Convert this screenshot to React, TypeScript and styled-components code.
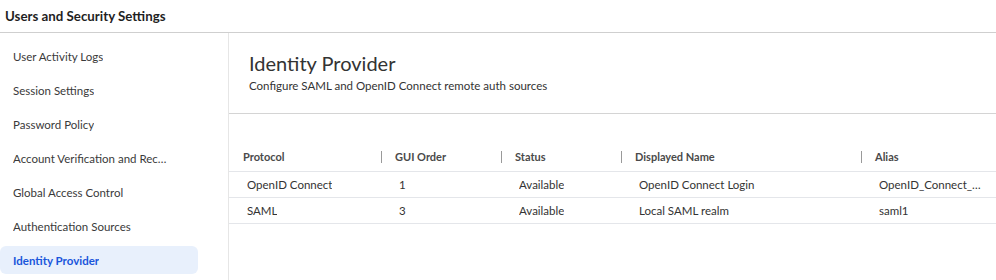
import React from 'react';
import styled, { createGlobalStyle } from 'styled-components';

const GlobalStyle = createGlobalStyle`
  html, body {
    margin: 0;
    padding: 0;
    background: #ffffff;
  }
  body {
    font-family: Lato, "Noto Sans", "Liberation Sans", sans-serif;
    color: #333333;
  }
  * {
    box-sizing: border-box;
  }
`;

const Page = styled.div`
  width: 996px;
  height: 280px;
  overflow: hidden;
  display: flex;
  flex-direction: column;
`;

const TopBar = styled.header`
  height: 33px;
  flex-shrink: 0;
  display: flex;
  align-items: center;
  padding: 0 0 1px 5px;
  border-bottom: 1px solid #cfcfcf;
  font-size: 13.3px;
  font-weight: 700;
  color: #1f1f1f;
`;

const Body = styled.div`
  flex: 1;
  display: flex;
  min-height: 0;
`;

const Sidebar = styled.nav`
  width: 229px;
  flex-shrink: 0;
  border-right: 1px solid #e6e6e6;
  padding-top: 9px;
  display: flex;
  flex-direction: column;
  gap: 6px;
`;

const NavItem = styled.div<{ $active?: boolean }>`
  width: 198px;
  height: 28px;
  padding: 0 26px 0 13px;
  display: flex;
  align-items: center;
  flex-shrink: 0;
  border-radius: 6px;
  font-size: 11.5px;
  font-weight: ${({ $active }) => ($active ? 700 : 400)};
  color: ${({ $active }) => ($active ? '#1a56db' : '#3a3a3a')};
  background: ${({ $active }) => ($active ? '#e8f0fc' : 'transparent')};

  span {
    white-space: nowrap;
    overflow: hidden;
    text-overflow: ellipsis;
  }
`;

const Content = styled.main`
  flex: 1;
  display: flex;
  flex-direction: column;
`;

const ContentHeader = styled.div`
  height: 81px;
  padding: 17px 0 0 20px;
  border-bottom: 1px solid #d4d4d4;
`;

const Title = styled.h1`
  margin: 0;
  font-size: 20px;
  line-height: 26px;
  font-weight: 400;
  color: #333333;
`;

const Subtitle = styled.p`
  margin: 2px 0 0;
  font-size: 11.5px;
  line-height: 16px;
  color: #333333;
`;

const Table = styled.div`
  margin-top: 28px;
  display: grid;
  grid-template-columns: 152px 120px 120px 240px 1fr;
`;

const HeadCell = styled.div<{ $sep?: boolean }>`
  position: relative;
  height: 30px;
  display: flex;
  align-items: center;
  padding-left: 14px;
  font-size: 11px;
  font-weight: 700;
  color: #4a4a4a;
  border-bottom: 1px solid #e4e6ea;

  &::before {
    content: '';
    display: ${({ $sep }) => ($sep ? 'block' : 'none')};
    position: absolute;
    left: 0;
    top: 9px;
    width: 1px;
    height: 12px;
    background: #9a9a9a;
  }
`;

const Cell = styled.div`
  height: 26px;
  display: flex;
  align-items: center;
  padding-left: 18px;
  padding-right: 12px;
  font-size: 11.5px;
  color: #333333;
  border-bottom: 1px solid #e4e6ea;
  min-width: 0;

  span {
    white-space: nowrap;
    overflow: hidden;
    text-overflow: ellipsis;
  }
`;

const navItems = [
  'User Activity Logs',
  'Session Settings',
  'Password Policy',
  'Account Verification and Recovery',
  'Global Access Control',
  'Authentication Sources',
  'Identity Provider',
];

const columns = ['Protocol', 'GUI Order', 'Status', 'Displayed Name', 'Alias'];

const rows = [
  ['OpenID Connect', '1', 'Available', 'OpenID Connect Login', 'OpenID_Connect_Login'],
  ['SAML', '3', 'Available', 'Local SAML realm', 'saml1'],
];

export default function App() {
  return (
    <>
      <GlobalStyle />
      <Page>
        <TopBar>Users and Security Settings</TopBar>
        <Body>
          <Sidebar>
            {navItems.map((label) => (
              <NavItem key={label} $active={label === 'Identity Provider'}>
                <span>{label}</span>
              </NavItem>
            ))}
          </Sidebar>
          <Content>
            <ContentHeader>
              <Title>Identity Provider</Title>
              <Subtitle>Configure SAML and OpenID Connect remote auth sources</Subtitle>
            </ContentHeader>
            <Table>
              {columns.map((c, i) => (
                <HeadCell key={c} $sep={i > 0}>
                  {c}
                </HeadCell>
              ))}
              {rows.map((r) =>
                r.map((v, i) => (
                  <Cell key={r[0] + i}>
                    <span>{v}</span>
                  </Cell>
                ))
              )}
            </Table>
          </Content>
        </Body>
      </Page>
    </>
  );
}
